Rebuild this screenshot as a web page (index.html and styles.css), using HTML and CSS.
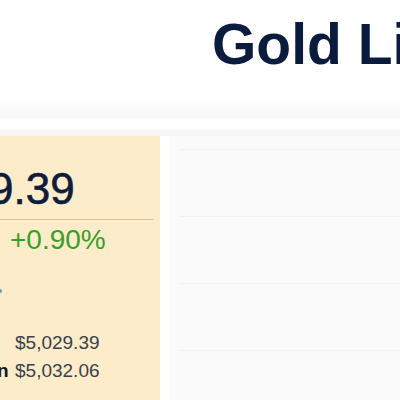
FILE: index.html
```html
<!DOCTYPE html>
<html lang="en">
<head>
<meta charset="utf-8">
<title>Gold Live Price</title>
<link rel="stylesheet" href="styles.css">
</head>
<body>
<header class="header">
  <h1 class="title">Gold Live Price</h1>
</header>
<div class="fade"></div>
<div class="spacer"></div>
<div class="band"></div>
<main class="main">
  <section class="card">
    <div class="price">$5,029.39</div>
    <div class="divider"></div>
    <div class="change-row">
      <span class="change-pct">+0.90%</span>
    </div>
    <div class="note"><span class="live-dot"></span></div>
    <div class="stats">
      <span class="stat-label">Bid</span><span class="stat-value">$5,029.39</span>
      <span class="stat-label">Open</span><span class="stat-value">$5,032.06</span>
    </div>
  </section>
  <section class="panel">
    <div class="skeleton-row"></div>
    <div class="skeleton-row"></div>
    <div class="skeleton-row"></div>
    <div class="skeleton-row"></div>
  </section>
</main>
</body>
</html>
```

FILE: styles.css
```css
html, body {
  margin: 0;
  padding: 0;
  background: #ffffff;
}
body {
  width: 400px;
  height: 400px;
  overflow: hidden;
  font-family: "Liberation Sans", Arial, sans-serif;
}
.header {
  height: 98px;
  box-sizing: border-box;
  padding: 16px 0 0 212px;
  white-space: nowrap;
}
.title {
  margin: 0;
  font-size: 57px;
  line-height: 57px;
  font-weight: 700;
  color: #0b1b3e;
}
.fade {
  height: 20px;
  background: linear-gradient(#ffffff, #f8f8f8);
}
.spacer {
  height: 12px;
  background: #fefefe;
}
.band {
  height: 6px;
  background: #f6f6f6;
}
.main {
  display: flex;
  gap: 9px;
  margin-left: -140px;
  height: 264px;
}
.card {
  flex: 0 0 300px;
  box-sizing: border-box;
  background: #fdecc9;
  padding: 27px 7px 0 19px;
  white-space: nowrap;
}
.price {
  font-size: 44px;
  line-height: 52px;
  color: #0f1c3b;
  -webkit-text-stroke: 0.6px #0f1c3b;
}
.divider {
  margin-top: 4px;
  height: 1px;
  background: #d6c094;
}
.change-row {
  margin-top: 5px;
  padding-left: 131px;
  font-size: 28px;
  line-height: 30px;
}
.change-pct {
  color: #38a02a;
}
.note {
  height: 74px;
  box-sizing: border-box;
  padding: 34px 0 0 117px;
}
.live-dot {
  display: block;
  width: 6px;
  height: 4px;
  border-radius: 2px;
  background: #4aa6b8;
}
.stats {
  display: grid;
  grid-template-columns: 55px auto;
  justify-content: start;
  padding-left: 81px;
}
.stat-label {
  font-size: 19px;
  line-height: 28px;
  font-weight: 700;
  color: #16181c;
}
.stat-value {
  font-size: 19px;
  line-height: 28px;
  color: #3a414c;
}
.panel {
  flex: 1 1 auto;
  min-width: 300px;
  background: #fafafa;
  padding: 13px 0 0 11px;
}
.skeleton-row {
  height: 66px;
  border-top: 1px solid #f1f1f1;
}
```
